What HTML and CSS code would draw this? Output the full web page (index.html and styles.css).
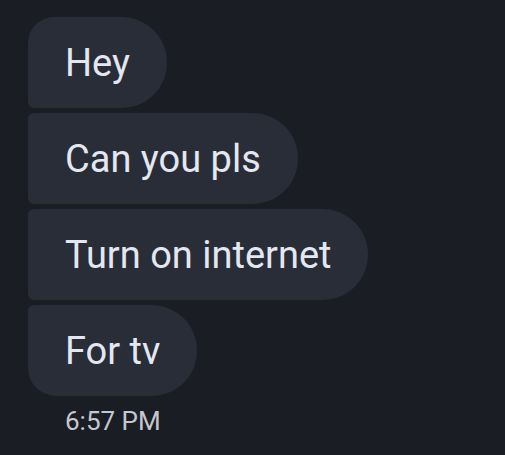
FILE: index.html
```html
<!DOCTYPE html>
<html>
<head>
<meta charset="utf-8">
<link rel="stylesheet" href="styles.css">
</head>
<body>
<div class="thread">
  <div class="bubble first">Hey</div>
  <div class="bubble">Can you pls</div>
  <div class="bubble">Turn on internet</div>
  <div class="bubble last">For tv</div>
  <div class="time">6:57 PM</div>
</div>
</body>
</html>
```
FILE: styles.css
```css
html, body {
  margin: 0;
  padding: 0;
  background: #1a1d24;
  height: 100%;
}
.thread {
  display: flex;
  flex-direction: column;
  align-items: flex-start;
  gap: 5px;
  padding: 17px 0 0 28px;
  font-family: Roboto, "Noto Sans", sans-serif;
}
.bubble {
  box-sizing: border-box;
  height: 91px;
  display: flex;
  align-items: center;
  padding: 0 37px;
  background: #282d38;
  color: #e4e7f0;
  font-size: 38px;
  border-radius: 6px 45.5px 45.5px 6px;
}
.bubble.first {
  border-top-left-radius: 26px;
}
.bubble.last {
  border-bottom-left-radius: 28px;
}
.time {
  margin: 5px 0 0 37px;
  color: #c4c7d0;
  font-size: 26px;
}
```
